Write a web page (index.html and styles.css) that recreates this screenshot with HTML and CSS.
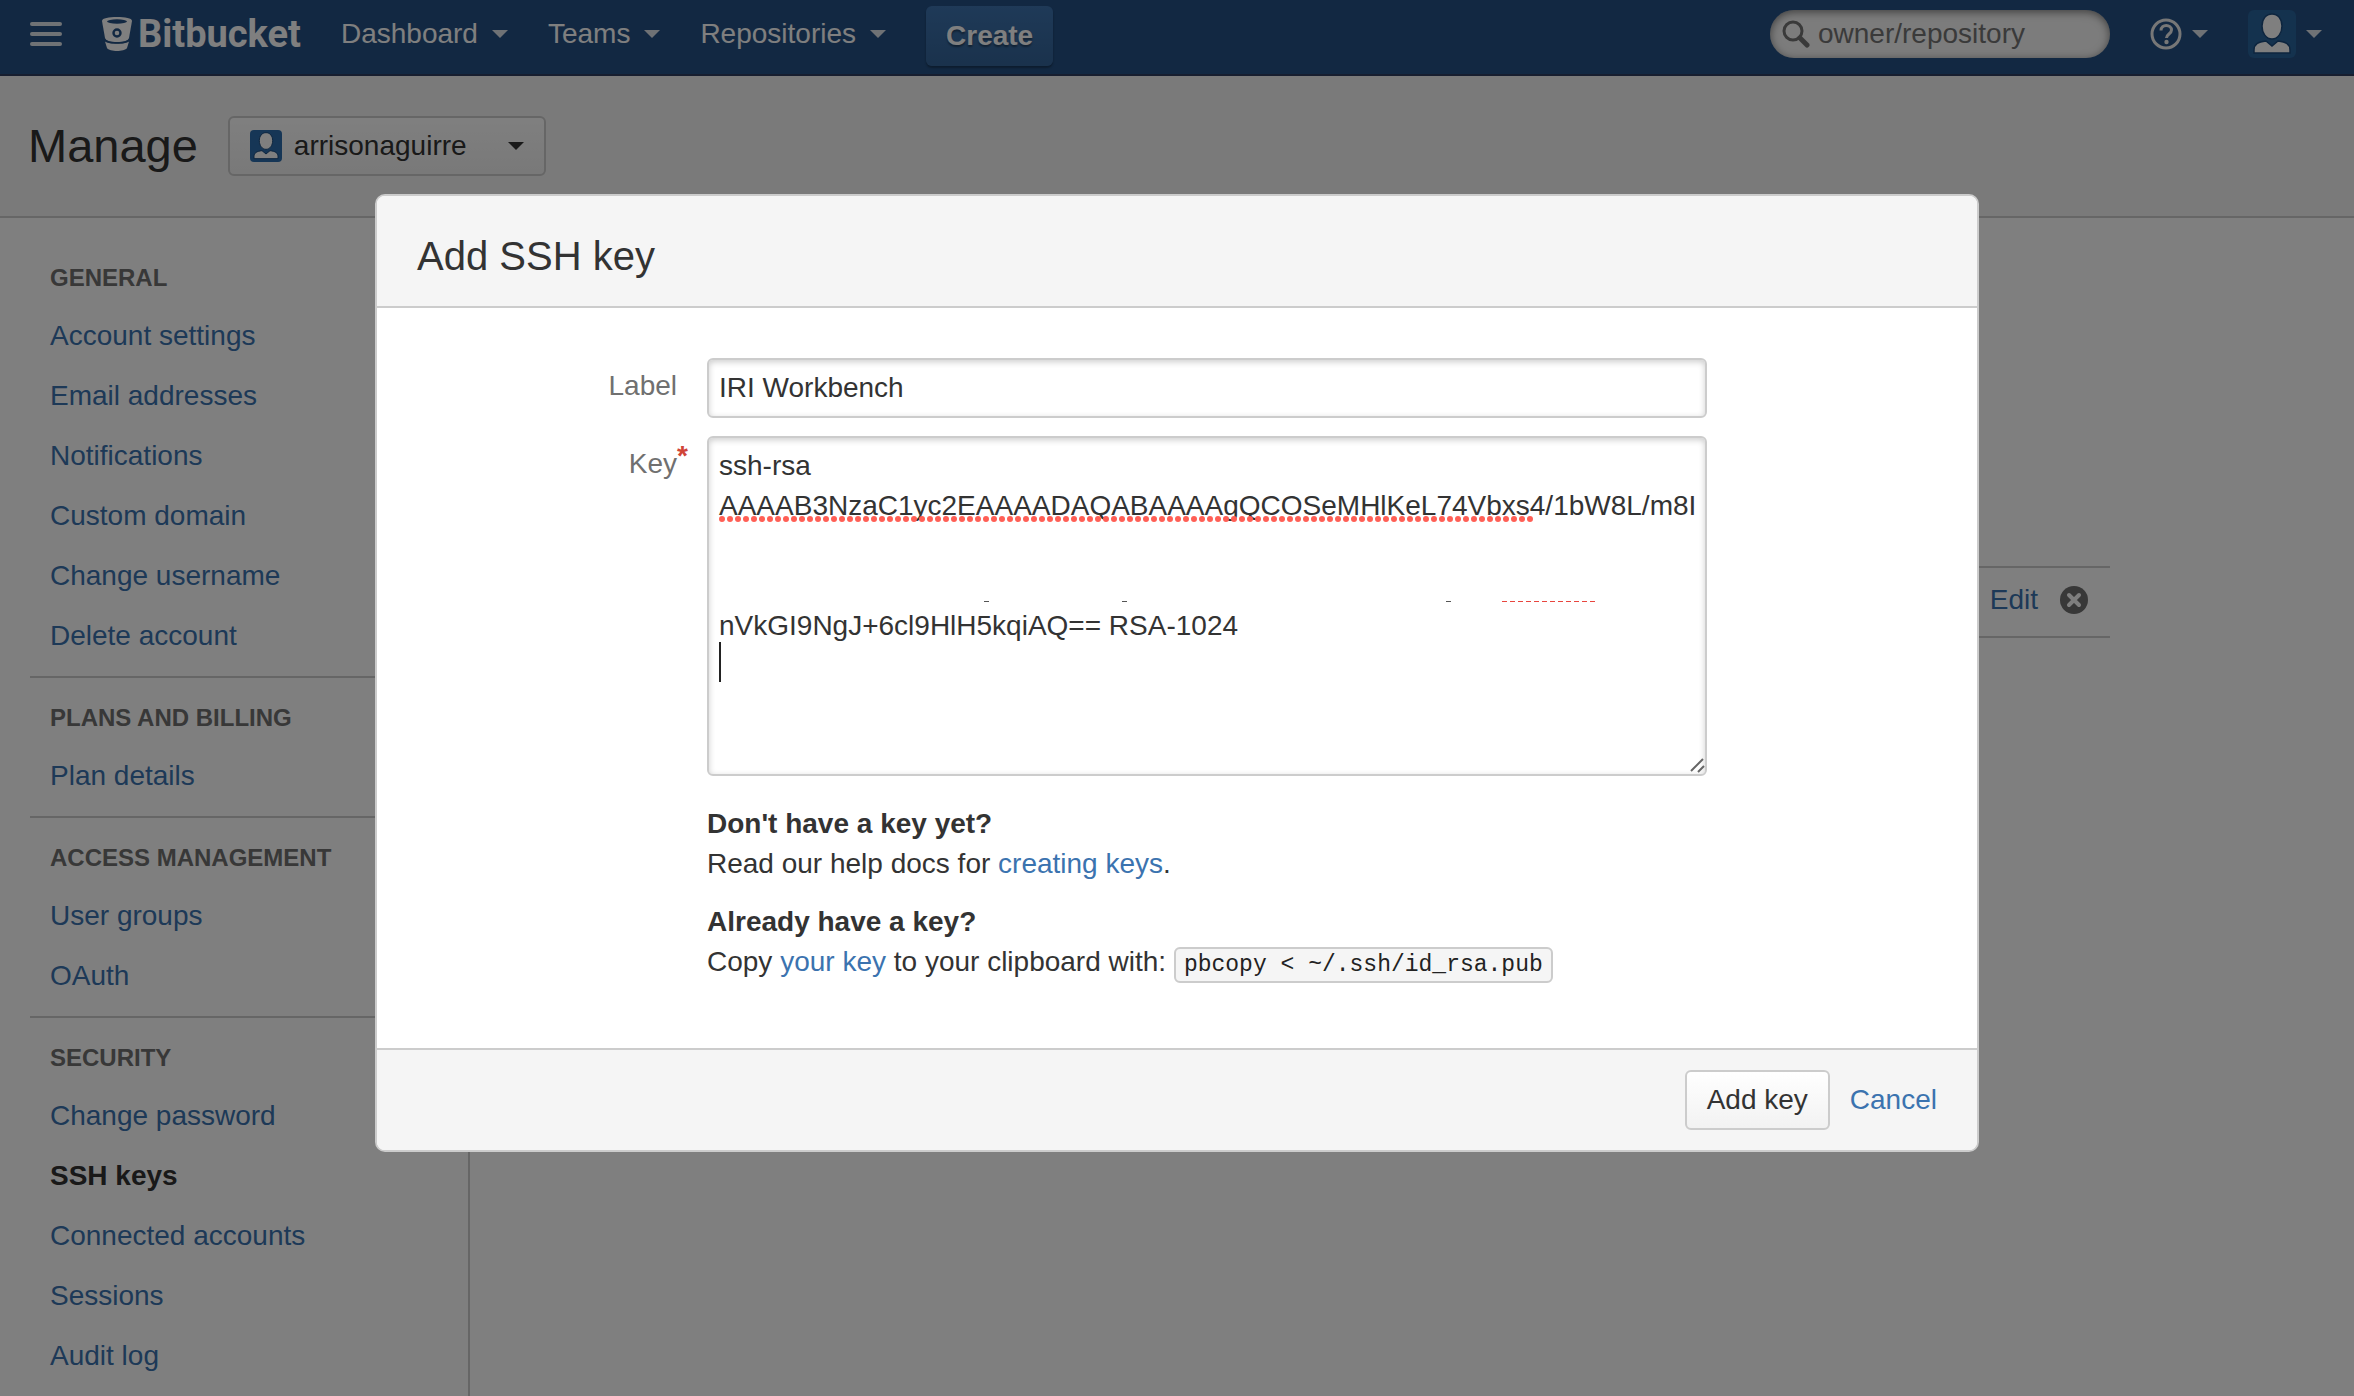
FILE: index.html
```html
<!DOCTYPE html>
<html lang="en">
<head>
    <meta charset="UTF-8">
    <meta name="viewport" content="width=device-width, initial-scale=1.0">
    <title>Manage SSH keys - Bitbucket</title>
    <link rel="stylesheet" href="styles.css">
</head>
<body>
    <svg width="0" height="0" class="sprite" aria-hidden="true">
        <symbol id="avatar" viewBox="0 0 48 48">
            <path d="M24 4c6 0 10 5 10 12s-4 13-10 13-10-6-10-13S18 4 24 4z" fill="#fff" stroke="#1b4a7d" stroke-width="1.500"/>
            <path d="M6 43V40c0-6 4-8 12-9l6 5 6-5c8 1 12 3 12 9v3z" fill="#fff" stroke="#1b4a7d" stroke-width="1.500"/>
        </symbol>
    </svg>

    <header class="app-header">
        <button class="icon-button" aria-label="Menu">
            <svg width="32" height="24" viewBox="0 0 32 24" fill="#dfe5eb">
                <rect width="32" height="4" rx="2"/>
                <rect y="10" width="32" height="4" rx="2"/>
                <rect y="20" width="32" height="4" rx="2"/>
            </svg>
        </button>
        <a class="logo" href="#">
            <svg width="30" height="34" viewBox="0 0 30 34">
                <path d="M0 4C0 1 7 0 15 0s15 1 15 4l-3 17c-1 3-6 4-12 4S4 24 3 21z" fill="#fff"/>
                <ellipse cx="15" cy="4.500" rx="10" ry="2.200" fill="#245084"/>
                <circle cx="15" cy="16" r="3.500" fill="#fff" stroke="#245084" stroke-width="2.400"/>
                <path d="M3 24.500c4 3 20 3 24 0l-2 6.500c-1 2-6 3-10 3s-9-1-10-3z" fill="#fff"/>
                <path d="M3 23c4 4 20 4 24 0" fill="none" stroke="#245084" stroke-width="1.200"/>
            </svg>
            <span>Bitbucket</span>
        </a>
        <nav class="main-nav">
            <a class="nav-item" href="#">Dashboard <i class="caret"></i></a>
            <a class="nav-item" href="#">Teams <i class="caret"></i></a>
            <a class="nav-item" href="#">Repositories <i class="caret"></i></a>
            <button class="create">Create</button>
        </nav>
        <div class="header-right">
            <div class="search">
                <svg width="28" height="28" viewBox="0 0 28 28" fill="none" stroke="#747474">
                    <circle cx="11" cy="11" r="9" stroke-width="3"/>
                    <path d="M18 18l7 7" stroke-width="5" stroke-linecap="round"/>
                </svg>
                <input type="text" placeholder="owner/repository" aria-label="Find a repository">
            </div>
            <button class="icon-button" aria-label="Help">
                <svg width="32" height="32" viewBox="0 0 32 32" fill="none" stroke="#eee" stroke-width="3">
                    <circle cx="16" cy="16" r="14"/>
                    <path d="M11 12.500c0-7 10.500-6.500 10.500-.5 0 4-5 4-5 8"/>
                    <circle cx="16.500" cy="24" r="2.200" fill="#eee" stroke="none"/>
                </svg>
                <i class="caret"></i>
            </button>
            <button class="icon-button" aria-label="Account">
                <svg class="avatar avatar-header" width="48" height="48"><use href="#avatar"/></svg>
                <i class="caret"></i>
            </button>
        </div>
    </header>

    <div class="page-header">
        <h1>Manage</h1>
        <button class="account-select" aria-haspopup="true">
            <svg class="avatar" width="32" height="32"><use href="#avatar"/></svg>
            <span>arrisonaguirre</span>
            <i class="caret"></i>
        </button>
    </div>

    <div class="page">
        <nav class="sidebar">
            <section>
                <h2>General</h2>
                <a href="#">Account settings</a>
                <a href="#">Email addresses</a>
                <a href="#">Notifications</a>
                <a href="#">Custom domain</a>
                <a href="#">Change username</a>
                <a href="#">Delete account</a>
            </section>
            <section>
                <h2>Plans and billing</h2>
                <a href="#">Plan details</a>
            </section>
            <section>
                <h2>Access management</h2>
                <a href="#">User groups</a>
                <a href="#">OAuth</a>
            </section>
            <section>
                <h2>Security</h2>
                <a href="#">Change password</a>
                <a href="#" class="selected">SSH keys</a>
                <a href="#">Connected accounts</a>
                <a href="#">Sessions</a>
                <a href="#">Audit log</a>
            </section>
        </nav>
        <main class="content">
            <table class="keys">
                <tbody>
                    <tr>
                        <td></td>
                        <td>
                            <div class="actions">
                                <a href="#">Edit</a>
                                <button class="icon-button" aria-label="Delete key">
                                    <svg width="28" height="28" viewBox="0 0 28 28">
                                        <circle cx="14" cy="14" r="14" fill="#707070"/>
                                        <path d="M9 9l10 10M19 9L9 19" stroke="#fff" stroke-width="4" stroke-linecap="round"/>
                                    </svg>
                                </button>
                            </div>
                        </td>
                    </tr>
                </tbody>
            </table>
        </main>
    </div>

    <div class="blanket">
        <form class="dialog" role="dialog" aria-labelledby="dialog-title">
            <div class="dialog-header">
                <h2 id="dialog-title">Add SSH key</h2>
            </div>
            <div class="dialog-body">
                <label for="key-label">Label</label>
                <input type="text" id="key-label" class="field" value="IRI Workbench">

                <label for="key-text">Key<span class="required">*</span></label>
                <div class="key-field">
                    <textarea id="key-text" class="field" spellcheck="false">ssh-rsa
AAAAB3NzaC1yc2EAAAADAQABAAAAgQCOSeMHlKeL74Vbxs4/1bW8L/m8I


nVkGI9NgJ+6cl9HlH5kqiAQ== RSA-1024
</textarea>
                    <!-- spelling marks, text cursor -->
                    <svg class="marks" width="980" height="260" viewBox="0 0 980 260" fill="none">
                        <path d="M3 83H814" stroke="#ff5f55" stroke-width="6" stroke-linecap="round" stroke-dasharray="0 8"/>
                        <path d="M783 165.500H877" stroke="#e8453e" stroke-dasharray="5 3"/>
                        <path d="M265 165.500h5M403 165.500h5M727 165.500h5" stroke="#555"/>
                        <path d="M1 206v40" stroke="#222" stroke-width="2"/>
                    </svg>
                    <svg class="resizer" width="16" height="16" viewBox="0 0 16 16" stroke="#666" stroke-width="2">
                        <path d="M2 14L14 2M9 15l6-6"/>
                    </svg>
                </div>

                <div class="help">
                    <p><strong>Don't have a key yet?</strong><br>
                    Read our help docs for <a href="#">creating keys</a>.</p>
                    <p><strong>Already have a key?</strong><br>
                    Copy <a href="#">your key</a> to your clipboard with: <code>pbcopy &lt; ~/.ssh/id_rsa.pub</code></p>
                </div>
            </div>
            <div class="dialog-footer">
                <button type="submit" class="button">Add key</button>
                <a href="#">Cancel</a>
            </div>
        </form>
    </div>
</body>
</html>
```
FILE: styles.css
```css
* {
    box-sizing: border-box;
}
body {
    font-family: "Liberation Sans", Arial, sans-serif;
    font-size: 28px;
    line-height: 40px;
    color: #333;
    margin: 0;
    min-height: 100vh;
    overflow: hidden;
    display: flex;
    flex-direction: column;
    background-color: #fff;
}
h1, h2, p {
    margin: 0;
}
a {
    color: #3b73af;
    text-decoration: none;
}
button, input, textarea {
    font: inherit;
    color: inherit;
}
button {
    cursor: pointer;
}
svg {
    display: block;
    flex: none;
}
.sprite {
    position: absolute;
}
.caret {
    border: 8px solid transparent;
    border-top-color: currentColor;
    border-bottom: 0;
}
.icon-button {
    display: flex;
    align-items: center;
    gap: 10px;
    padding: 0;
    border: 0;
    background: none;
}
.avatar {
    background: #2c6cac;
    border-radius: 4px;
}
.avatar-header {
    background: #28649c;
    border-radius: 6px;
}

/* Header */
.app-header {
    display: flex;
    align-items: center;
    height: 76px;
    padding: 0 32px 6px 30px;
    background: #245084;
    border-bottom: 2px solid #2e3d5e;
    color: #fff;
}
.logo {
    display: flex;
    align-items: center;
    gap: 6px;
    margin-left: 40px;
    color: #fff;
    font-family: Roboto, "Liberation Sans", sans-serif;
    font-size: 38px;
    font-weight: 700;
}
.main-nav {
    display: flex;
    align-items: center;
    gap: 40px;
    margin-left: 40px;
}
.nav-item {
    display: flex;
    align-items: center;
    gap: 14px;
    color: #fff;
}
.app-header .caret {
    border-top-color: #dfe5eb;
}
.create {
    height: 60px;
    margin-top: 4px;
    padding: 0 20px;
    border: 0;
    border-radius: 6px;
    background: linear-gradient(#3e74b0, #346499);
    box-shadow: 0 2px 2px rgba(0, 0, 0, 0.3);
    color: #fff;
    font-weight: bold;
    text-shadow: 0 2px 2px rgba(0, 0, 0, 0.4);
}
.header-right {
    display: flex;
    align-items: center;
    gap: 40px;
    margin-left: auto;
}
.search {
    display: flex;
    align-items: center;
    gap: 8px;
    width: 340px;
    height: 48px;
    padding: 0 12px;
    border-radius: 24px;
    background: #f8f8f8;
    box-shadow: inset 0 2px 8px rgba(0, 0, 0, 0.5);
    color: #747474;
}
.search input {
    flex: 1;
    min-width: 0;
    padding: 0;
    border: 0;
    outline: 0;
    background: none;
}
.search input::placeholder {
    color: #747474;
}

/* Page header */
.page-header {
    display: flex;
    align-items: center;
    gap: 30px;
    padding: 40px 28px;
    background: #f5f5f5;
    border-bottom: 2px solid #ccc;
}
.page-header h1 {
    font-size: 47px;
    font-weight: normal;
}
.account-select {
    display: flex;
    align-items: center;
    gap: 12px;
    width: 318px;
    height: 60px;
    padding: 0 20px;
    border: 2px solid #ccc;
    border-radius: 6px;
    background: linear-gradient(#fff, #f2f2f2);
}
.account-select .caret {
    margin-left: auto;
}

/* Page */
.page {
    flex: 1;
    display: flex;
}
.sidebar {
    width: 440px;
    margin-left: 30px;
    padding-top: 20px;
    border-right: 2px solid #ccc;
}
.sidebar section {
    padding: 20px 20px 10px;
}
.sidebar section + section {
    border-top: 2px solid #ccc;
}
.sidebar h2 {
    margin-bottom: 8px;
    font-size: 24px;
    color: #707070;
    text-transform: uppercase;
}
.sidebar a {
    display: block;
    padding: 10px 0;
}
.sidebar .selected {
    color: #333;
    font-weight: bold;
}
.content {
    flex: 1;
    max-width: 1640px;
    padding: 348px 0 40px 40px;
}
.keys {
    width: 100%;
    border-collapse: collapse;
}
.keys tr {
    height: 70px;
    border-top: 2px solid #ccc;
    border-bottom: 2px solid #ccc;
}
.keys td {
    padding: 0;
    vertical-align: top;
}
.actions {
    display: flex;
    align-items: center;
    justify-content: flex-end;
    gap: 22px;
    padding: 12px 22px 12px 0;
}

/* Dialog */
.blanket {
    position: fixed;
    top: 0;
    right: 0;
    bottom: 0;
    left: 0;
    padding-top: 194px;
    background: rgba(0, 0, 0, 0.5);
}
.dialog {
    max-width: 1604px;
    margin: 0 auto;
    border: 2px solid #ccc;
    border-radius: 10px;
    background: #fff;
    overflow: hidden;
}
.dialog-header {
    padding: 40px 40px 30px;
    background: #f5f5f5;
    border-bottom: 2px solid #ccc;
}
.dialog-header h2 {
    font-size: 40px;
    font-weight: normal;
}
.dialog-body {
    display: grid;
    grid-template-columns: 300px minmax(0, 1000px);
    gap: 18px 30px;
    padding: 50px 40px 66px 0;
}
.dialog-body label {
    position: relative;
    justify-self: end;
    align-self: start;
    padding-top: 8px;
    color: #707070;
}
.required {
    position: absolute;
    top: 0;
    left: 100%;
    color: #d04437;
    font-weight: bold;
}
.field {
    display: block;
    width: 100%;
    height: 60px;
    padding: 8px 10px;
    border: 2px solid #ccc;
    border-radius: 6px;
    outline: 0;
    background: #fff;
    box-shadow: inset 0 2px 6px rgba(0, 0, 0, 0.2);
}
textarea.field {
    height: 340px;
    resize: none;
    overflow: hidden;
    white-space: pre;
}
.key-field {
    position: relative;
}
.marks {
    position: absolute;
    top: 0;
    left: 12px;
    pointer-events: none;
}
.resizer {
    position: absolute;
    right: 2px;
    bottom: 3px;
}
.help {
    grid-column: 2;
    padding-top: 10px;
}
.help p + p {
    margin-top: 18px;
}
.help code {
    padding: 3px 8px;
    border: 2px solid #ccc;
    border-radius: 6px;
    background: #f5f5f5;
    color: #222;
    font-family: "Liberation Mono", "Courier New", monospace;
    font-size: 23px;
    line-height: 1;
}
.dialog-footer {
    display: flex;
    align-items: center;
    justify-content: flex-end;
    gap: 20px;
    padding: 20px 40px;
    background: #f5f5f5;
    border-top: 2px solid #ccc;
}
.button {
    height: 60px;
    padding: 0 20px;
    border: 2px solid #ccc;
    border-radius: 6px;
    background: linear-gradient(#fff, #f2f2f2);
}
```
